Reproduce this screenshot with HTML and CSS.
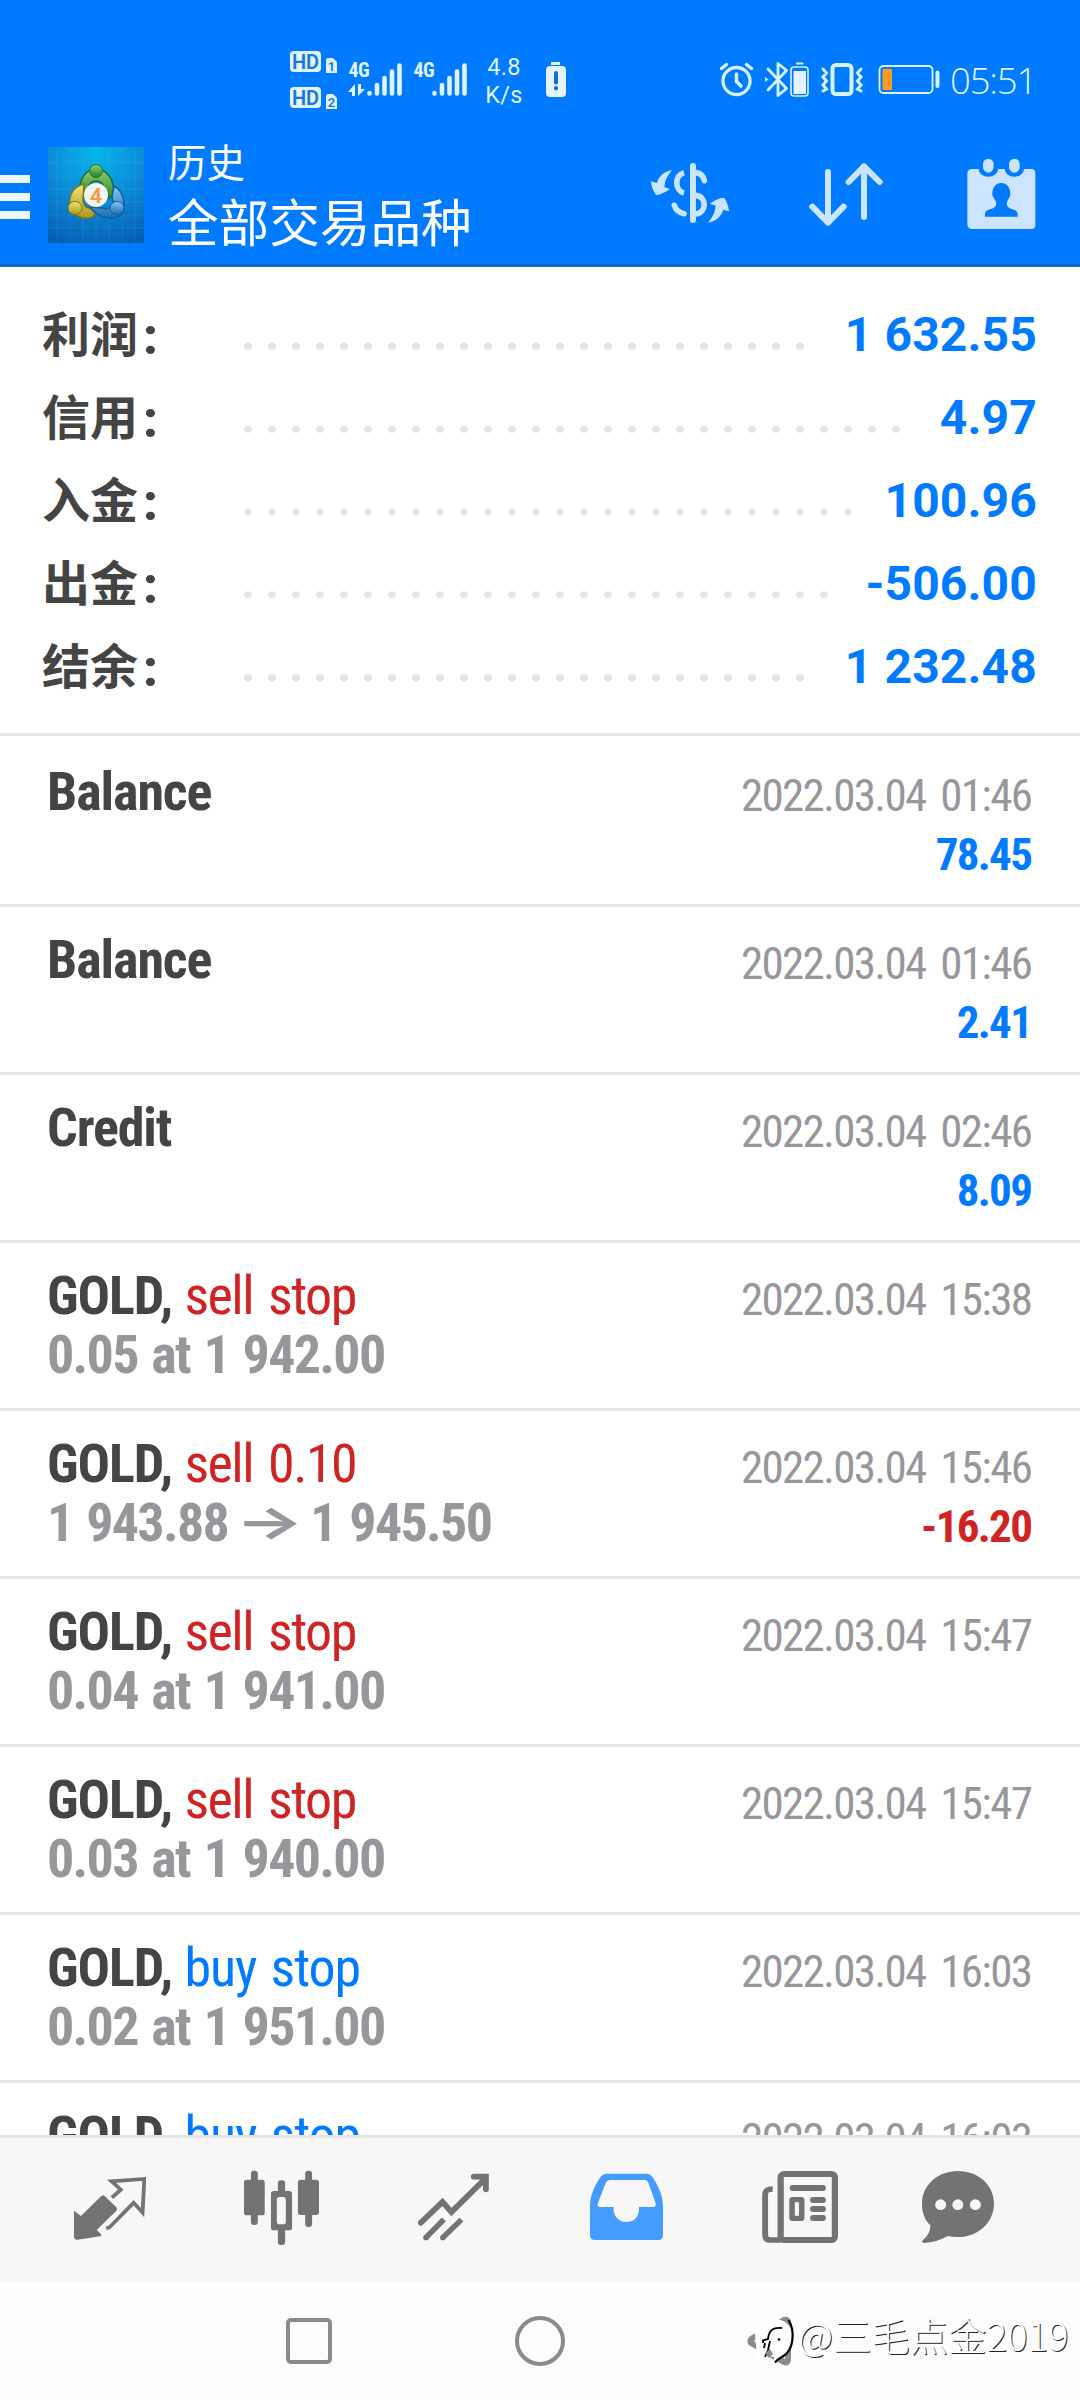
FILE: index.html
```html
<!DOCTYPE html>
<html lang="zh-CN">
<head>
<meta charset="utf-8">
<title>历史</title>
<link rel="stylesheet" href="styles.css">
</head>
<body>
<div class="screen">
  <header class="header">
    <div class="status">
      <svg class="st-hd" viewBox="288 50 52 60" width="52" height="60">
        <g fill="#dff4ff"><rect x="290" y="51" width="31" height="21" rx="4"/><rect x="290" y="87" width="31" height="21" rx="4"/>
        <path d="M326 60a2 2 0 0 1 2-2h5l4 4v11h-11zM326 96a2 2 0 0 1 2-2h5l4 4v11h-11z"/></g>
        <g class="hd-text"><text x="305.5" y="68.500" font-size="20">HD</text><text x="305.500" y="104.500" font-size="20">HD</text><text x="331.500" y="71" font-size="13">1</text><text x="331.500" y="107" font-size="13">2</text></g>
      </svg>
      <svg class="st-sig1" viewBox="347 50 56 60" width="56" height="60">
        <text class="g4" x="348.500" y="77">4G</text>
        <path d="M369.500 93v.5M377 85v8.500M384.500 78v15.500M392 71.500v22M399.500 65.500v28" class="bars"/>
        <path d="M348 92l7-8v12h-3v-4zM365 89l-7 7v-12h3v5z" fill="#dff4ff"/>
      </svg>
      <svg class="st-sig2" viewBox="412 50 56 60" width="56" height="60">
        <text class="g4" x="413.500" y="77">4G</text>
        <path d="M434.500 93v.5M442 85v8.500M449.500 78v15.500M457 71.500v22M464.500 65.500v28" class="bars"/>
      </svg>
      <div class="speed"><span>4.8</span><span>K/s</span></div>
      <svg class="st-alert" viewBox="545 50 22 60" width="22" height="60">
        <rect x="551" y="62" width="9" height="3" fill="#dff4ff"/><rect x="546" y="66" width="20" height="31" rx="4" fill="#e6f2ff"/>
        <path d="M556 73v9.500M556 88v.5" stroke="#0b6fe0" stroke-width="4" stroke-linecap="round"/>
      </svg>
      <svg class="st-right" viewBox="718 50 224 60" width="224" height="60">
        <g fill="none" stroke="#d6f3ff" stroke-linecap="round">
          <circle cx="736.500" cy="81" r="13.500" stroke-width="3.300"/><path d="M736.500 74v7.500l4.500 4.500" stroke-width="3.500"/><path d="M721.500 68.500l5-4M751.500 68.500l-5-4" stroke-width="3.500"/>
          <path d="M768 69l18.500 19.500-8.500 7V63.500l8.500 7L768 90" stroke-width="2.800" stroke-linejoin="round"/>
          <rect x="791" y="67" width="17" height="29" rx="3" stroke-width="1.600"/><path d="M797 63.500h5.500" stroke-width="2.200"/>
          <rect x="832.500" y="65" width="19" height="29" rx="3.500" stroke-width="4"/>
          <path d="M823 69l3.500 4-3.500 4 3.500 4-3.500 4 3.500 4-3.500 2M861 69l-3.500 4 3.500 4-3.500 4 3.500 4-3.500 4 3.500 2" stroke-width="3"/>
          <rect x="879.500" y="66" width="53" height="27" rx="4" stroke-width="1.800"/>
          <path d="M937.500 72.500v13.500" stroke-width="4"/>
        </g>
        <path d="M765 77l3.500 2.500-3.500 2.500z" fill="#d6f3ff"/>
        <rect x="793.500" y="71" width="12.500" height="23" fill="#e6f2ff"/>
        <rect x="882.500" y="69" width="9.500" height="21" rx="1.500" fill="#ff9a1e"/>
      </svg>
      <div class="clock">05:51</div>
    </div>
    <div class="appbar">
      <div class="burger"><i></i><i></i><i></i></div>
      <svg class="logo" viewBox="0 0 96 96" width="96" height="96">
        <defs>
          <radialGradient id="sky" cx=".5" cy=".05" r="1"><stop offset="0" stop-color="#06b6ec"/><stop offset=".5" stop-color="#0b8cd6"/><stop offset="1" stop-color="#0560b4"/></radialGradient>
          <linearGradient id="gr" x2="0" y2="1"><stop stop-color="#8fd06a"/><stop offset="1" stop-color="#23802c"/></linearGradient>
          <linearGradient id="ye" x2="0" y2="1"><stop stop-color="#efe37c"/><stop offset="1" stop-color="#ab9918"/></linearGradient>
          <linearGradient id="bl" x2="0" y2="1"><stop stop-color="#83c8f2"/><stop offset="1" stop-color="#176fb5"/></linearGradient>
        </defs>
        <rect width="96" height="96" fill="url(#sky)"/>
        <path d="M9 0v96M22 0v96M35 0v96M48 0v96M61 0v96M74 0v96M87 0v96M0 16h96M0 29h96M0 42h96M0 55h96M0 68h96M0 81h96" stroke="#6cd0f5" stroke-opacity=".13"/>
        <path d="M32 47c-2-16 7-25 16-25s20 9 17 27l-7 4c0-13-4-19-10-19s-9 6-8 10z" fill="url(#gr)" stroke="#216b32" stroke-width="1.500"/>
        <path d="M36 37c-11 2-16 12-14 23 2 8 13 14 23 10l5-9c-10 2-15-1-15-9z" fill="url(#ye)" stroke="#77751b" stroke-width="1.500"/>
        <path d="M66 39c10 5 12 20 8 28-7 6-23 6-32-7l12 1c8 3 13-3 10-11z" fill="url(#bl)" stroke="#155d98" stroke-width="1.500"/>
        <circle cx="48" cy="24" r="6.500" fill="url(#gr)" stroke="#216b32"/><ellipse cx="27" cy="61" rx="7" ry="6.500" fill="url(#ye)" stroke="#77751b"/><ellipse cx="69" cy="61" rx="7" ry="6.500" fill="url(#bl)" stroke="#155d98"/>
        <circle cx="48" cy="48" r="12" fill="#f4f4f4"/>
        <text x="48" y="55.500" class="four">4</text>
      </svg>
      <div class="titles"><div class="t1">历史</div><div class="t2">全部交易品种</div></div>
      <svg class="ic-money" viewBox="93 66 234 186" width="78" height="62">
        <g fill="none" stroke="#cbe5ff" stroke-width="18" stroke-linecap="round"><path d="M219 78v162"/><path d="M228 98c14 2 22 10 25 24M228 166c32 4 34 50 0 56M163 196c4 14 14 22 29 25" stroke-width="17"/><path d="M192 98c-30 8-28 54 0 61" stroke-width="17" stroke-linecap="butt"/></g>
        <path d="M156 90c-22 4-40 18-46 39l-17-5c1 15 6 29 15 41 15-1 29-8 42-18l-17-6c1-18 9-34 23-51zM264 248c22-4 40-18 46-39l17 5c-1-15-6-29-15-41-15 1-29 8-42 18l17 6c-1 18-9 34-23 51z" fill="#cbe5ff"/>
      </svg>
      <svg class="ic-sort" viewBox="567 66 222 195" width="74" height="65">
        <path d="M624 96v152M577 200l47 48 47-48M732 231V79M686 126l46-47 47 47" fill="none" stroke="#cbe5ff" stroke-width="18" stroke-linecap="round" stroke-linejoin="round"/>
      </svg>
      <svg class="ic-cal" viewBox="1043 54 207 216" width="69" height="72">
        <path d="M1058 87h20a29 23 0 0 0 58 0h20a29 23 0 0 0 58 0h22a12 12 0 0 1 12 12v156a12 12 0 0 1-12 12h-178a14 14 0 0 1-14-14V101a14 14 0 0 1 14-14z" fill="#cce4ff"/>
        <rect x="1091" y="56" width="32" height="42" rx="16" fill="#cce4ff"/><rect x="1169" y="56" width="32" height="42" rx="16" fill="#cce4ff"/>
        <path d="M1146 129c17 0 26 13 27 32 0 12-7 16-10 25-4 15 8 20 23 24 8 3 10 10 9 20h-98c-1-10 1-17 9-20 15-4 28-9 24-24-2-9-11-13-11-25 1-19 10-32 27-32z" fill="#007aff"/>
      </svg>
    </div>
  </header>

  <section class="summary">
    <div class="sum"><b>利润<i>:</i></b><span class="dots" style="width:564px"></span><strong>1 632.55</strong></div>
    <div class="sum"><b>信用<i>:</i></b><span class="dots" style="width:660px"></span><strong>4.97</strong></div>
    <div class="sum"><b>入金<i>:</i></b><span class="dots" style="width:612px"></span><strong>100.96</strong></div>
    <div class="sum"><b>出金<i>:</i></b><span class="dots" style="width:588px"></span><strong>-506.00</strong></div>
    <div class="sum"><b>结余<i>:</i></b><span class="dots" style="width:564px"></span><strong>1 232.48</strong></div>
  </section>

  <main class="list">
    <div class="row"><div class="l"><p>Balance</p></div><div class="r"><p>2022.03.04 01:46</p><p class="amt">78.45</p></div></div>
    <div class="row"><div class="l"><p>Balance</p></div><div class="r"><p>2022.03.04 01:46</p><p class="amt">2.41</p></div></div>
    <div class="row"><div class="l"><p>Credit</p></div><div class="r"><p>2022.03.04 02:46</p><p class="amt">8.09</p></div></div>
    <div class="row"><div class="l"><p>GOLD, <span class="sell">sell stop</span></p><p class="sub">0.05 at 1 942.00</p></div><div class="r"><p>2022.03.04 15:38</p></div></div>
    <div class="row"><div class="l"><p>GOLD, <span class="sell">sell 0.10</span></p><p class="sub">1 943.88 <span class="arrow">→</span> 1 945.50</p></div><div class="r"><p>2022.03.04 15:46</p><p class="amt neg">-16.20</p></div></div>
    <div class="row"><div class="l"><p>GOLD, <span class="sell">sell stop</span></p><p class="sub">0.04 at 1 941.00</p></div><div class="r"><p>2022.03.04 15:47</p></div></div>
    <div class="row"><div class="l"><p>GOLD, <span class="sell">sell stop</span></p><p class="sub">0.03 at 1 940.00</p></div><div class="r"><p>2022.03.04 15:47</p></div></div>
    <div class="row"><div class="l"><p>GOLD, <span class="buy">buy stop</span></p><p class="sub">0.02 at 1 951.00</p></div><div class="r"><p>2022.03.04 16:03</p></div></div>
    <div class="row"><div class="l"><p>GOLD, <span class="buy">buy stop</span></p></div><div class="r"><p>2022.03.04 16:03</p></div></div>
  </main>

  <nav class="tabs">
    <svg class="tab-quotes" viewBox="215 330 209 228" width="72" height="76" preserveAspectRatio="none">
      <path d="M215 455q0-5 4 0l16 13 59-60q5-5 10 0l34 34q4 5 0 10l-57 58 12 12q4 6-2 7l-66 10q-10 1-10-9z" fill="#737373"/>
      <path d="M325 413l26-24-27-25 95-7-5 101-26-30-71 75-9 2" fill="none" stroke="#737373" stroke-width="11"/>
    </svg>
    <svg class="tab-charts" viewBox="709 330 217 228" width="75" height="76" preserveAspectRatio="none">
      <g fill="#737373"><rect x="709" y="359" width="60" height="107" rx="8"/><rect x="729" y="332" width="20" height="163" rx="9"/><rect x="865" y="359" width="61" height="106" rx="8"/><rect x="886" y="332" width="20" height="169" rx="9"/><rect x="787" y="393" width="61" height="118" rx="8"/><rect x="807" y="361" width="21" height="194" rx="9"/></g>
      <rect x="804" y="411" width="26" height="82" rx="8" fill="#f7f7f7"/>
    </svg>
    <svg class="tab-trade" viewBox="1214 330 206 228" width="71" height="76" preserveAspectRatio="none">
      <path d="M1222 488l63-62 26 30 98-100M1376 350h35v38" fill="none" stroke="#737373" stroke-width="17" stroke-linecap="round"/>
      <path d="M1289 478l-52 55M1340 479l-54 54" fill="none" stroke="#737373" stroke-width="16"/><circle cx="1237" cy="533" r="8" fill="#737373"/><circle cx="1286" cy="533" r="8" fill="#737373"/>
    </svg>
    <svg class="tab-history" viewBox="146 330 210 228" width="73" height="76" preserveAspectRatio="none">
      <path fill-rule="evenodd" d="M193 341h116q10 0 16 9c20 30 31 60 31 90v86q0 14-14 14H160q-14 0-14-14v-86c0-30 11-62 31-90q6-9 16-9zm10 19q-8 0-12 9l-23 62q-2 10 8 10h38c-2 28 14 45 37 45s38-17 36-45h39q12 0 9-11l-21-61q-3-9-12-9z" fill="#449cff"/>
    </svg>
    <svg class="tab-news" viewBox="645 330 220 228" width="76" height="76" preserveAspectRatio="none">
      <rect x="699" y="342" width="157" height="198" rx="10" fill="none" stroke="#737373" stroke-width="18"/>
      <path d="M676 387c-15 0-22 4-22 18v119c0 10 5 16 15 16h30" fill="none" stroke="#737373" stroke-width="17"/>
      <path d="M734 384h87M793 420h28M793 447h28M793 474h28" stroke="#737373" stroke-width="18" stroke-linecap="round"/>
      <rect x="732" y="419" width="28" height="56" rx="2" fill="none" stroke="#737373" stroke-width="16"/>
    </svg>
    <svg class="tab-chat" viewBox="1109 330 209 228" width="72" height="76" preserveAspectRatio="none">
      <path d="M1213 333c60 0 105 42 105 98 0 62-57 113-134 97-22 13-45 20-69 21q-9-2-4-8c15-12 22-27 22-45-16-17-24-38-24-65 0-56 46-98 104-98z" fill="#737373"/>
      <g fill="#f7f7f7"><circle cx="1163" cy="434" r="16"/><circle cx="1213" cy="434" r="16"/><circle cx="1264" cy="434" r="16"/></g>
    </svg>
  </nav>

  <footer class="nav">
    <i class="square"></i><i class="circle"></i>
    <svg class="back" viewBox="745 2314 52 56" width="52" height="56">
      <path d="M784 2320L752 2338.500q-3.500 2.500 0 5L784 2362q4 1.500 4-3v-36q0-4-4-3z" fill="none" stroke="#8a8a8a" stroke-width="6"/>
      <path d="M755 2335c0-10 8-16 19-16 12 0 19 8 19 20 0 11-6 17-16 20l-3 4v-6c-4 0-6-1-8-4l-3 6-6-2z" fill="#fff"/>
      <path d="M788.500 2320c7 11 5 30-5 36-5 3-6 3-8.500 6.500" fill="none" stroke="#000" stroke-width="2.200"/>
      <path d="M782 2328c-9-1-13 2-14 11l-5 1.500v2.500M770 2341l-2 9-3 7M765 2343l-1 5" fill="none" stroke="#000" stroke-width="1.800"/>
      <path d="M765 2353l5-4 3 5-4 4z" fill="#8a8a8a"/><circle cx="779" cy="2339.500" r="1.300"/>
    </svg>
    <div class="mark">@三毛点金2019</div>
  </footer>
</div>
</body>
</html>
```
FILE: styles.css
```css
* { box-sizing: border-box; }
body { margin: 0; background: #fff; font-family: Roboto, "Noto Sans CJK SC", sans-serif; }
p { margin: 0; }
svg { display: block; flex: none; }
.screen { width: 1080px; height: 2400px; display: flex; flex-direction: column; overflow: hidden; background: #fff; }

.header { height: 267px; background: #007aff; border-bottom: 3px solid #0f66c4; flex: none; }
.status { height: 133px; padding: 50px 0 0 288px; display: flex; align-items: flex-start; color: #dff4ff; }
.hd-text text { fill: #1b78d8; font-family: Roboto, sans-serif; font-weight: 600; text-anchor: middle; }
.g4 { fill: #dff4ff; font: 700 20px "Roboto Condensed", Roboto, sans-serif; font-stretch: 75%; letter-spacing: -.6px; }
.bars { stroke: #dff4ff; stroke-width: 4.6px; stroke-linecap: round; fill: none; }
.st-sig1 { margin-left: 7px; }
.st-sig2 { margin-left: 9px; }
.speed { width: 46px; margin-left: 13px; padding-top: 3px; display: flex; flex-direction: column; align-items: center; font-size: 23.5px; line-height: 28px; letter-spacing: .3px; }
.st-alert { margin-left: 18px; }
.st-right { margin-left: 151px; }
.clock { margin-left: 8px; font: 300 36.5px/60px "Open Sans", sans-serif; letter-spacing: -1.2px; }

.appbar { display: flex; align-items: flex-start; color: #fff; }
.burger { width: 30px; margin: 42px 18px 0 0; display: flex; flex-direction: column; gap: 10px; }
.burger i { height: 8px; background: #f0f8ff; }
.logo { margin-top: 14px; }
.four { font: 600 21px Roboto, sans-serif; fill: #f39a3e; text-anchor: middle; }
.titles { width: 483px; margin-left: 24px; font-family: "Noto Sans CJK SC", sans-serif; }
.t1 { font-size: 38.5px; line-height: 56px; margin-top: -1px; }
.t2 { font-size: 50.6px; line-height: 64px; }
.ic-money { margin: 29px 0 0 0; }
.ic-sort { margin: 29px 0 0 80px; }
.ic-cal { margin: 25px 0 0 84px; }

.summary { height: 469px; padding: 26px 43px 0 42px; border-bottom: 3px solid #e5e5e5; flex: none; }
.sum { height: 83px; display: flex; align-items: center; font-size: 48px; }
.sum b { width: 200px; color: #444; font-family: "Noto Sans CJK SC", sans-serif; line-height: 76px; height: 83px; }
.sum b i { display: inline-block; font: 900 50px/1 Roboto, sans-serif; margin-left: 5px; transform: translateY(2px); }
.dots { height: 8px; margin-top: 23px; background: radial-gradient(circle at 6px 4px, #e5e5e5 3.4px, transparent 4.1px) 0 0 / 24px 8px repeat-x; }
.sum strong { margin-left: auto; color: #007aff; font-weight: 700; white-space: pre; letter-spacing: .15px; }

.list { height: 1399px; overflow: hidden; padding-top: 3px; flex: none; font-family: "Roboto Condensed", Roboto, sans-serif; font-stretch: 75%; }
.row { height: 168px; padding: 23px 48px 0 47px; border-bottom: 3px solid #e5e5e5; display: flex; justify-content: space-between; line-height: 59px; white-space: nowrap; }
.l { font-size: 54px; font-weight: 700; color: #444; letter-spacing: -1.1px; word-spacing: 1px; }
.l p { height: 59px; }
.l .sub { color: #97979b; letter-spacing: -1.7px; word-spacing: 2.8px; }
.l .sell { color: #d02424; font-weight: 400; letter-spacing: -1.5px; word-spacing: 4px; }
.l .buy { color: #007aff; font-weight: 400; letter-spacing: -1.1px; word-spacing: 3px; }
.arrow { display: inline-block; width: 55px; text-align: center; font-family: Inter, sans-serif; font-size: 45px; font-weight: 700; line-height: 1; letter-spacing: 0; transform: translateY(-3px) scaleX(1.6); }
.r { padding-top: 4px; font-size: 45px; color: #97979b; text-align: right; letter-spacing: -1.7px; word-spacing: 6.2px; margin-right: .8px; }
.r .amt { color: #007aff; font-weight: 700; }
.r .neg { color: #d02424; }

.tabs { height: 147px; border-top: 3px solid #e5e5e5; background: #f7f7f7; padding: 32px 0 0 74px; display: flex; flex: none; }
.tab-charts { margin-left: 98px; }
.tab-trade { margin-left: 99px; }
.tab-history { margin-left: 101px; }
.tab-news { margin-left: 99px; }
.tab-chat { margin-left: 84px; }

.nav { height: 118px; background: #fcfcfc; display: flex; align-items: flex-start; flex: none; }
.square { width: 46px; height: 46px; margin: 36px 0 0 286px; border: 4.5px solid #8a8a8a; border-radius: 5px; }
.circle { width: 50px; height: 50px; margin: 34px 0 0 183px; border: 4.5px solid #8a8a8a; border-radius: 50%; }
.back { margin: 32px 0 0 180px; }
.mark { margin: 24px 0 0 1px; font: 300 38.4px/56px "Noto Sans CJK SC", sans-serif; color: #fff; text-shadow: 1px 1px 0 #222; white-space: nowrap; }
```
